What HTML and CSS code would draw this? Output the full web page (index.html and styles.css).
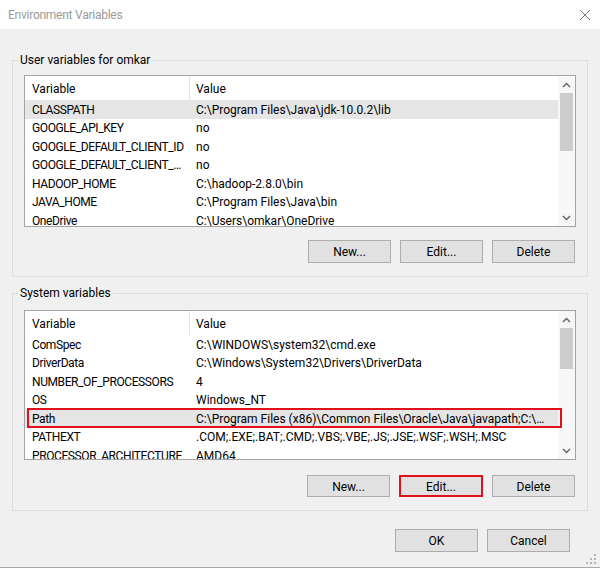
FILE: index.html
```html
<!DOCTYPE html>
<html lang="en">
<head>
<meta charset="utf-8">
<title>Environment Variables</title>
<link rel="stylesheet" href="styles.css">
</head>
<body>
<div class="window">
  <div class="titlebar">
    <span class="title">Environment Variables</span>
    <svg class="close" width="12" height="12" viewBox="0 0 12 12"><path d="M1 1L11 11M11 1L1 11" stroke="#7a7a7a" stroke-width="1" fill="none"/></svg>
  </div>
  <div class="body">
    <fieldset class="group group-user">
      <legend>User variables for omkar</legend>
      <div class="listbox list-user">
        <div class="list-main">
          <div class="row header"><div class="cell c1">Variable</div><div class="cell c2">Value</div></div>
          <div class="row selected"><div class="cell c1">CLASSPATH</div><div class="cell c2">C:\Program Files\Java\jdk-10.0.2\lib</div></div>
          <div class="row"><div class="cell c1">GOOGLE_API_KEY</div><div class="cell c2">no</div></div>
          <div class="row"><div class="cell c1">GOOGLE_DEFAULT_CLIENT_ID</div><div class="cell c2">no</div></div>
          <div class="row"><div class="cell c1">GOOGLE_DEFAULT_CLIENT_SECRET</div><div class="cell c2">no</div></div>
          <div class="row"><div class="cell c1">HADOOP_HOME</div><div class="cell c2">C:\hadoop-2.8.0\bin</div></div>
          <div class="row"><div class="cell c1">JAVA_HOME</div><div class="cell c2">C:\Program Files\Java\bin</div></div>
          <div class="row"><div class="cell c1">OneDrive</div><div class="cell c2">C:\Users\omkar\OneDrive</div></div>
        </div>
        <div class="scrollbar">
          <div class="sb-btn"><svg width="9" height="6" viewBox="0 0 9 6"><path d="M1 5L4.5 1.5L8 5" stroke="#606060" stroke-width="1.4" fill="none"/></svg></div>
          <div class="sb-track"><div class="sb-thumb thumb-user"></div></div>
          <div class="sb-btn"><svg width="9" height="6" viewBox="0 0 9 6"><path d="M1 1L4.5 4.5L8 1" stroke="#606060" stroke-width="1.4" fill="none"/></svg></div>
        </div>
      </div>
      <div class="btn-row">
        <button class="btn">New...</button>
        <button class="btn">Edit...</button>
        <button class="btn">Delete</button>
      </div>
    </fieldset>

    <fieldset class="group group-system">
      <legend>System variables</legend>
      <div class="listbox list-system">
        <div class="list-main">
          <div class="row header"><div class="cell c1">Variable</div><div class="cell c2">Value</div></div>
          <div class="row"><div class="cell c1">ComSpec</div><div class="cell c2">C:\WINDOWS\system32\cmd.exe</div></div>
          <div class="row"><div class="cell c1">DriverData</div><div class="cell c2">C:\Windows\System32\Drivers\DriverData</div></div>
          <div class="row"><div class="cell c1">NUMBER_OF_PROCESSORS</div><div class="cell c2">4</div></div>
          <div class="row"><div class="cell c1">OS</div><div class="cell c2">Windows_NT</div></div>
          <div class="row selected"><div class="cell c1">Path</div><div class="cell c2">C:\Program Files (x86)\Common Files\Oracle\Java\javapath;C:\WINDOWS\system32;C:\WINDOWS</div></div>
          <div class="row"><div class="cell c1">PATHEXT</div><div class="cell c2">.COM;.EXE;.BAT;.CMD;.VBS;.VBE;.JS;.JSE;.WSF;.WSH;.MSC</div></div>
          <div class="row"><div class="cell c1">PROCESSOR_ARCHITECTURE</div><div class="cell c2">AMD64</div></div>
        </div>
        <div class="scrollbar">
          <div class="sb-btn"><svg width="9" height="6" viewBox="0 0 9 6"><path d="M1 5L4.5 1.5L8 5" stroke="#606060" stroke-width="1.4" fill="none"/></svg></div>
          <div class="sb-track"><div class="sb-thumb thumb-system"></div></div>
          <div class="sb-btn"><svg width="9" height="6" viewBox="0 0 9 6"><path d="M1 1L4.5 4.5L8 1" stroke="#606060" stroke-width="1.4" fill="none"/></svg></div>
        </div>
        <div class="highlight-box"></div>
      </div>
      <div class="btn-row">
        <button class="btn">New...</button>
        <button class="btn marked">Edit...</button>
        <button class="btn">Delete</button>
      </div>
    </fieldset>

    <div class="dialog-buttons">
      <button class="btn">OK</button>
      <button class="btn">Cancel</button>
    </div>
  </div>
  <svg class="grip" width="12" height="12" viewBox="0 0 12 12">
    <rect x="9" y="1" width="2" height="2" fill="#b4b4b4"/>
    <rect x="5" y="5" width="2" height="2" fill="#b4b4b4"/>
    <rect x="9" y="5" width="2" height="2" fill="#b4b4b4"/>
    <rect x="1" y="9" width="2" height="2" fill="#b4b4b4"/>
    <rect x="5" y="9" width="2" height="2" fill="#b4b4b4"/>
    <rect x="9" y="9" width="2" height="2" fill="#b4b4b4"/>
  </svg>
</div>
</body>
</html>
```

FILE: styles.css
```css
* { box-sizing: border-box; }

html, body {
  margin: 0;
  padding: 0;
}

body {
  background: #f0f0f0;
  font-family: Roboto, "Noto Sans", sans-serif;
  font-size: 12px;
  color: #000;
}

.window {
  position: relative;
  width: 600px;
  height: 568px;
  background: #f0f0f0;
  border-bottom: 1px solid #a9a9a9;
  display: flex;
  flex-direction: column;
}

.titlebar {
  height: 29px;
  background: #fff;
  display: flex;
  align-items: center;
  justify-content: space-between;
  padding: 0 9px 0 8px;
  flex: none;
}

.title {
  color: #9a9a9a;
  letter-spacing: -0.25px;
}

.body {
  padding: 0 12px;
  flex: 1;
  display: flex;
  flex-direction: column;
}

.group {
  margin: 0;
  border: 1px solid #dcdcdc;
  padding: 7px 11px 13px 11px;
  min-width: 0;
}

.group legend {
  margin-left: -6px;
  padding: 1px 2px 0 2px;
  line-height: 15px;
  height: 16px;
}

.group-user {
  margin-top: 23px;
}

.group-system {
  margin-top: 8px;
  padding-top: 9px;
}

.listbox {
  position: relative;
  display: flex;
  background: #fff;
  border: 1px solid #a3a3a3;
  overflow: hidden;
}

.list-user { height: 152px; }
.list-system { height: 150px; }

.list-main {
  flex: 1;
  min-width: 0;
  overflow: hidden;
}

.row {
  display: grid;
  grid-template-columns: 165px 1fr;
  height: 18.5px;
  align-items: center;
  white-space: nowrap;
}

.row.header {
  height: 24px;
  align-items: stretch;
}

.row.header .cell {
  display: flex;
  align-items: center;
}

.row.header .c1 {
  border-right: 1px solid #e5e5e5;
}

.row.selected {
  background: #e5e5e5;
}

.cell {
  overflow: hidden;
  text-overflow: ellipsis;
  line-height: 16px;
  padding-top: 1px;
}

.c1 { padding-left: 7px; padding-right: 4px; letter-spacing: -0.4px; }
.c2 { padding-left: 6px; padding-right: 6px; }

.row.header .c1 { letter-spacing: 0; }

.scrollbar {
  width: 17px;
  flex: none;
  background: #f7f7f7;
  display: flex;
  flex-direction: column;
}

.sb-btn {
  height: 17px;
  flex: none;
  display: flex;
  align-items: center;
  justify-content: center;
}

.sb-track {
  flex: 1;
  padding: 0 2px;
}

.sb-thumb {
  background: #cdcdcd;
  width: 100%;
}

.thumb-user { height: 58px; }
.thumb-system { height: 41px; }

.highlight-box {
  position: absolute;
  left: 2px;
  top: 97px;
  width: 535px;
  height: 20px;
  border: 2px solid #e0101c;
  pointer-events: none;
}

.btn-row {
  display: flex;
  justify-content: flex-end;
  gap: 9px;
  padding-right: 1px;
}

.group-user .btn-row { margin-top: 13px; }
.group-system .btn-row { margin-top: 15px; }

.btn {
  width: 83px;
  height: 23px;
  background: #e1e1e1;
  border: 1px solid #adadad;
  font-family: inherit;
  font-size: 12px;
  color: #000;
  padding: 1px 0 0 0;
  margin: 0;
}

.group-system .btn { height: 22px; }

.btn.marked {
  border: 2px solid #e0101c;
  width: 84px;
}

.dialog-buttons {
  display: flex;
  justify-content: flex-end;
  gap: 9px;
  margin-top: 18px;
  padding-right: 18px;
}

.grip {
  position: absolute;
  right: 3px;
  bottom: 2px;
}
```
